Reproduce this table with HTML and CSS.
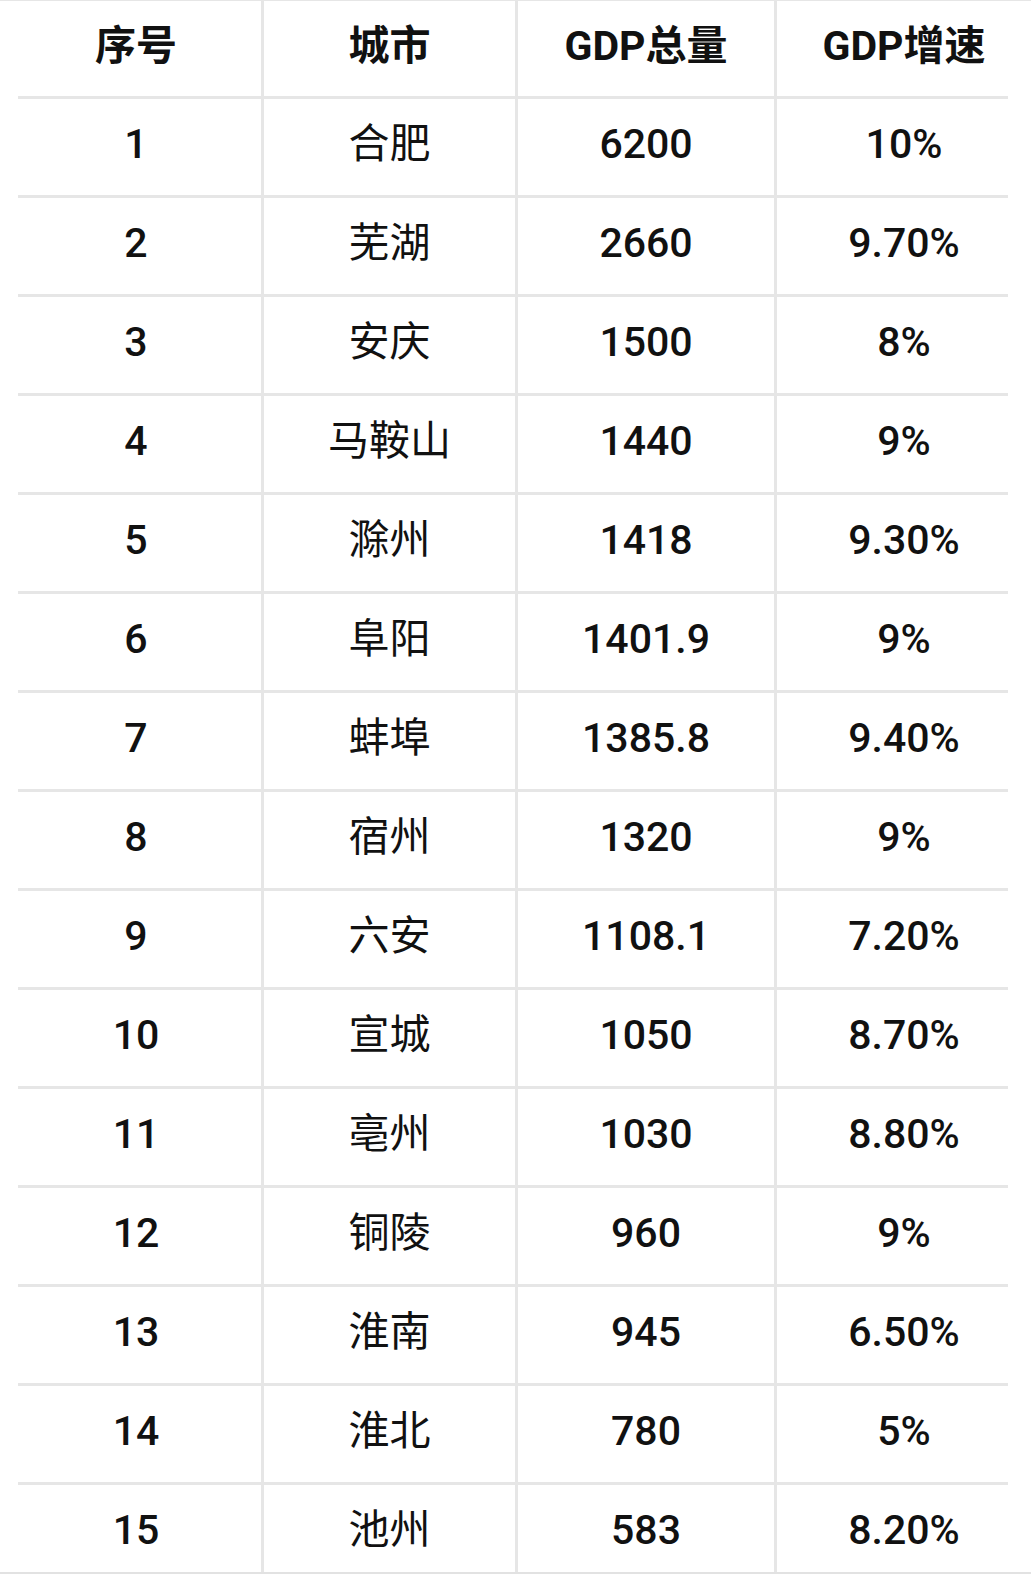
FILE: index.html
```html
<!DOCTYPE html>
<html lang="zh-CN">
<head>
<meta charset="utf-8">
<title>安徽各市GDP</title>
<link rel="stylesheet" href="styles.css">
</head>
<body>
<div class="sheet">
  <div class="row head">
    <div class="cell c1">序号</div>
    <div class="cell">城市</div>
    <div class="cell">GDP总量</div>
    <div class="cell">GDP增速</div>
  </div>
  <div class="row"><div class="cell c1">1</div><div class="cell city">合肥</div><div class="cell">6200</div><div class="cell">10%</div></div>
  <div class="row"><div class="cell c1">2</div><div class="cell city">芜湖</div><div class="cell">2660</div><div class="cell">9.70%</div></div>
  <div class="row"><div class="cell c1">3</div><div class="cell city">安庆</div><div class="cell">1500</div><div class="cell">8%</div></div>
  <div class="row"><div class="cell c1">4</div><div class="cell city">马鞍山</div><div class="cell">1440</div><div class="cell">9%</div></div>
  <div class="row"><div class="cell c1">5</div><div class="cell city">滁州</div><div class="cell">1418</div><div class="cell">9.30%</div></div>
  <div class="row"><div class="cell c1">6</div><div class="cell city">阜阳</div><div class="cell">1401.9</div><div class="cell">9%</div></div>
  <div class="row"><div class="cell c1">7</div><div class="cell city">蚌埠</div><div class="cell">1385.8</div><div class="cell">9.40%</div></div>
  <div class="row"><div class="cell c1">8</div><div class="cell city">宿州</div><div class="cell">1320</div><div class="cell">9%</div></div>
  <div class="row"><div class="cell c1">9</div><div class="cell city">六安</div><div class="cell">1108.1</div><div class="cell">7.20%</div></div>
  <div class="row"><div class="cell c1">10</div><div class="cell city">宣城</div><div class="cell">1050</div><div class="cell">8.70%</div></div>
  <div class="row"><div class="cell c1">11</div><div class="cell city">亳州</div><div class="cell">1030</div><div class="cell">8.80%</div></div>
  <div class="row"><div class="cell c1">12</div><div class="cell city">铜陵</div><div class="cell">960</div><div class="cell">9%</div></div>
  <div class="row"><div class="cell c1">13</div><div class="cell city">淮南</div><div class="cell">945</div><div class="cell">6.50%</div></div>
  <div class="row"><div class="cell c1">14</div><div class="cell city">淮北</div><div class="cell">780</div><div class="cell">5%</div></div>
  <div class="row last"><div class="cell c1">15</div><div class="cell city">池州</div><div class="cell">583</div><div class="cell">8.20%</div></div>
</div>
</body>
</html>
```

FILE: styles.css
```css
html, body {
  margin: 0;
  padding: 0;
  background: #ffffff;
}

body {
  width: 1031px;
  height: 1574px;
  overflow: hidden;
  font-family: Roboto, "Noto Sans CJK SC", sans-serif;
  color: #111111;
}

.sheet {
  border-top: 1px solid #e6e6e6;
  border-bottom: 2px solid #e2e2e2;
}

.row {
  display: grid;
  grid-template-columns: 261px 254px 259px 257px;
  padding-bottom: 3px;
  background: linear-gradient(#e6e6e6, #e6e6e6) 18px 100% / 990px 3px no-repeat;
}

.row.last {
  padding-bottom: 0;
  background: none;
}

.cell {
  height: 96px;
  padding-bottom: 5px;
  display: flex;
  align-items: center;
  justify-content: center;
  font-size: 41px;
  line-height: 1;
  font-weight: 500;
  border-left: 3px solid #e6e6e6;
  box-sizing: border-box;
}

.cell.c1 {
  border-left: none;
  padding-left: 11px;
}

.cell.city {
  font-weight: 400;
}

.head .cell {
  height: 95px;
  padding-bottom: 5px;
  font-weight: 700;
}

.row.last .cell {
  height: 87px;
  padding-top: 4px;
  padding-bottom: 0;
}
```
